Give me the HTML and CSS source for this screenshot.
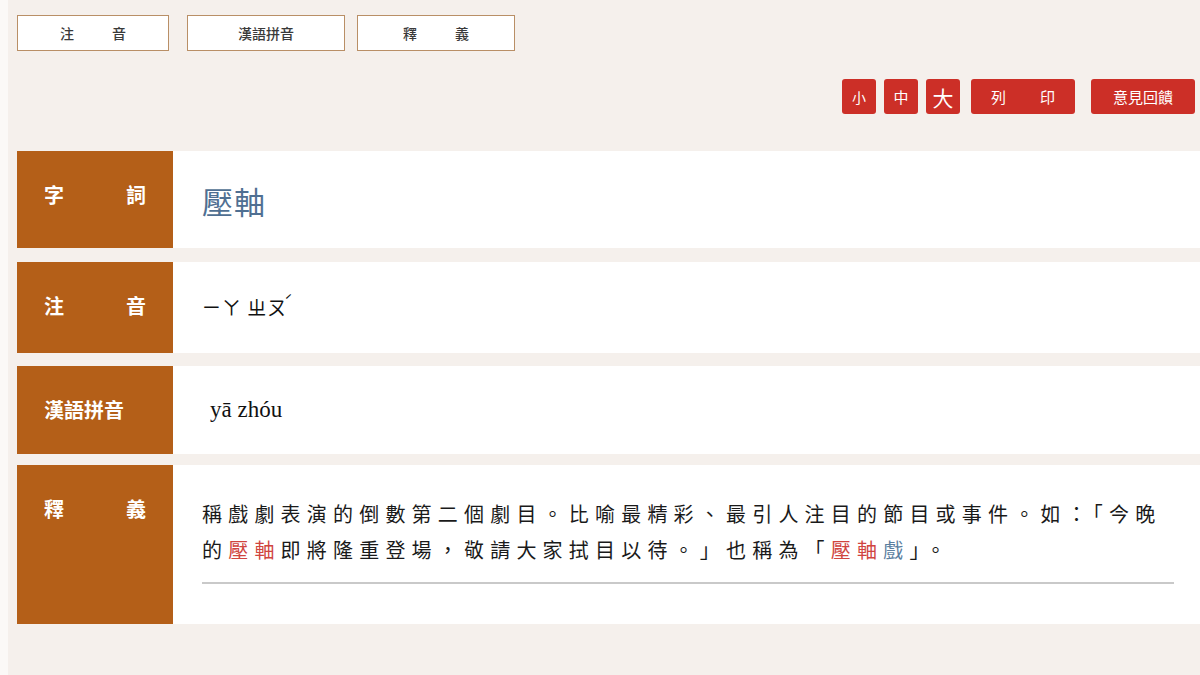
FILE: index.html
```html
<!DOCTYPE html>
<html lang="zh-Hant">
<head>
<meta charset="utf-8">
<title>壓軸</title>
<link rel="stylesheet" href="styles.css">
</head>
<body>
<div class="page">
  <nav class="tabs">
    <a class="tab">注<span class="gap"></span>音</a>
    <a class="tab">漢語拼音</a>
    <a class="tab">釋<span class="gap"></span>義</a>
  </nav>
  <div class="tools">
    <a class="btn sq sm">小</a>
    <a class="btn sq md">中</a>
    <a class="btn sq lg">大</a>
    <a class="btn wide print">列<span class="gap2"></span>印</a>
    <a class="btn wide feedback">意見回饋</a>
  </div>
  <section class="entry">
    <div class="row r1">
      <div class="label"><span>字</span><span>詞</span></div>
      <div class="content word">壓軸</div>
    </div>
    <div class="row r2">
      <div class="label"><span>注</span><span>音</span></div>
      <div class="content zhuyin">ㄧㄚ&nbsp;ㄓㄡ<span class="tone">ˊ</span></div>
    </div>
    <div class="row r3">
      <div class="label"><span>漢語拼音</span></div>
      <div class="content pinyin">yā zhóu</div>
    </div>
    <div class="row r4">
      <div class="label"><span>釋</span><span>義</span></div>
      <div class="content def">
        <p class="deftext">稱戲劇表演的倒數第二個劇目。比喻最精彩、最引人注目的節目或事件。如：「今晚的<span class="red">壓軸</span>即將隆重登場，敬請大家拭目以待。」也稱為「<span class="red">壓軸</span><span class="blue">戲</span>」。</p>
      </div>
    </div>
  </section>
</div>
</body>
</html>
```

FILE: styles.css
```css
html, body {
  margin: 0;
  padding: 0;
  background: #fbf9f7;
  height: 100%;
}
body {
  padding-left: 8px;
  font-family: "Noto Sans CJK TC", "Noto Sans", sans-serif;
}
.page {
  background: #f5f0ec;
  min-height: 675px;
  padding: 15px 0 0 9px;
  box-sizing: border-box;
}
.tabs {
  display: flex;
}
.tab {
  display: flex;
  align-items: center;
  justify-content: center;
  height: 36px;
  box-sizing: border-box;
  background: #fff;
  border: 1px solid #b98f66;
  font-size: 14px;
  font-weight: 500;
  color: #3a3a3a;
}
.tab:nth-child(1) { width: 152px; margin-right: 18px; }
.tab:nth-child(2) { width: 158px; margin-right: 12px; }
.tab:nth-child(3) { width: 158px; }
.tab .gap { display: inline-block; width: 38px; }
.tools {
  display: flex;
  justify-content: flex-end;
  margin-top: 28px;
  padding-right: 5px;
  gap: 8px;
}
.btn {
  background: #cc2f27;
  color: #fff;
  height: 35px;
  display: flex;
  align-items: center;
  justify-content: center;
  border-radius: 3px;
  font-size: 15px;
  box-sizing: border-box;
}
.btn.sq { width: 34px; }
.btn.sm { font-size: 14px; }
.btn.lg { font-size: 21px; margin-right: 3px; }
.btn.wide { width: 104px; }
.btn.print { margin-right: 8px; }
.btn .gap2 { display: inline-block; width: 34px; }
.entry {
  margin-top: 37px;
  display: flex;
  flex-direction: column;
  gap: 13px;
}
.row {
  display: flex;
  align-items: stretch;
}
.row.r2 { margin-top: 1px; }
.row.r4 { margin-top: -2px; }
.label {
  width: 156px;
  flex: none;
  background: #b45f18;
  color: #fff;
  font-weight: bold;
  font-size: 20px;
  line-height: 22px;
  padding: 33px 27px 0 27px;
  box-sizing: border-box;
  display: flex;
  justify-content: space-between;
  align-items: flex-start;
}
.content {
  flex: 1;
  background: #fff;
  padding-left: 29px;
  color: #111;
}
.word {
  font-size: 31px;
  line-height: 34px;
  color: #4f6f92;
  padding-top: 33px;
  padding-bottom: 30px;
  letter-spacing: 1px;
}
.zhuyin {
  font-size: 19px;
  line-height: 22px;
  padding-top: 34px;
  padding-bottom: 33px;
  letter-spacing: 1px;
}
.tone {
  font-size: 14px;
  position: relative;
  top: -9px;
  margin-left: -3px;
}
.pinyin {
  font-family: "Liberation Serif", "Times New Roman", serif;
  font-size: 23px;
  line-height: 24px;
  padding-top: 32px;
  padding-bottom: 32px;
  padding-left: 37px;
}
.def {
  padding-top: 31px;
  padding-right: 26px;
  padding-bottom: 40px;
}
.deftext {
  margin: 0;
  font-size: 20px;
  line-height: 36px;
  letter-spacing: 6.2px;
  padding-bottom: 14px;
  border-bottom: 2px solid #c9c9c9;
  color: #1a1a1a;
}
.red { color: #d0453f; }
.blue { color: #5c7f9f; }
```
